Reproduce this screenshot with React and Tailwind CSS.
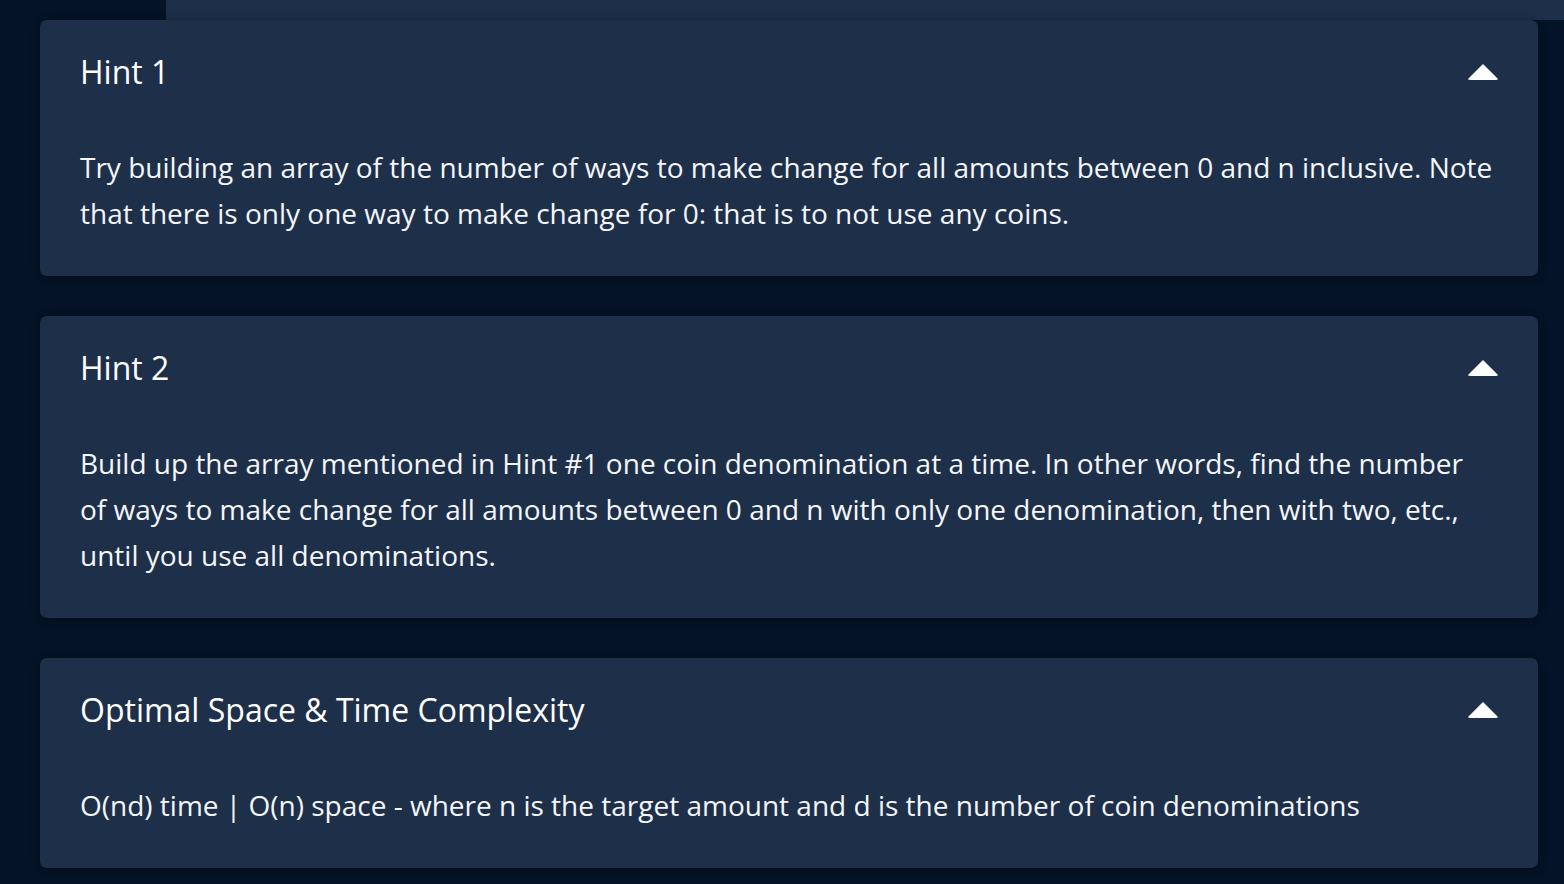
import React, { useState } from 'react';

const hints = [
  {
    title: 'Hint 1',
    body: 'Try building an array of the number of ways to make change for all amounts between 0 and n inclusive. Note that there is only one way to make change for 0: that is to not use any coins.',
  },
  {
    title: 'Hint 2',
    body: 'Build up the array mentioned in Hint #1 one coin denomination at a time. In other words, find the number of ways to make change for all amounts between 0 and n with only one denomination, then with two, etc., until you use all denominations.',
  },
  {
    title: 'Optimal Space & Time Complexity',
    body: 'O(nd) time | O(n) space - where n is the target amount and d is the number of coin denominations',
  },
];

const Arrow = ({ open }) => (
  <svg width="32" height="18" viewBox="0 0 32 18" className={open ? '' : 'rotate-180'}>
    <path d="M16 1.5 L30 15.5 Q31 16.5 29.5 16.5 L2.5 16.5 Q1 16.5 2 15.5 Z" fill="#ffffff" stroke="#ffffff" strokeWidth="1" strokeLinejoin="round" />
  </svg>
);

const HintCard = ({ title, body }) => {
  const [open, setOpen] = useState(true);
  return (
    <div className="bg-[#1e2f4a] rounded-[7px] shadow-[0_2px_8px_rgba(0,0,0,0.45)]">
      <button
        onClick={() => setOpen(!open)}
        className="w-full flex items-center justify-between pl-10 pr-[39px] pt-[28px] pb-[48px] text-left"
      >
        <span className="text-[32px] leading-[48px] text-white">{title}</span>
        <Arrow open={open} />
      </button>
      {open && (
        <p className="pl-10 pr-[42px] pb-10 text-[28px] leading-[46px] text-[#f4f6f9]">{body}</p>
      )}
    </div>
  );
};

export default function App() {
  return (
    <div className="min-h-screen bg-[#041426] font-['Open_Sans',sans-serif]">
      <div className="flex h-5">
        <div className="w-[166px] bg-[#041426]" />
        <div className="flex-1 bg-[#1e2f4a]" />
      </div>
      <div className="pl-10 pr-[26px] flex flex-col gap-10 pb-10">
        {hints.map((h) => (
          <HintCard key={h.title} {...h} />
        ))}
      </div>
    </div>
  );
}
